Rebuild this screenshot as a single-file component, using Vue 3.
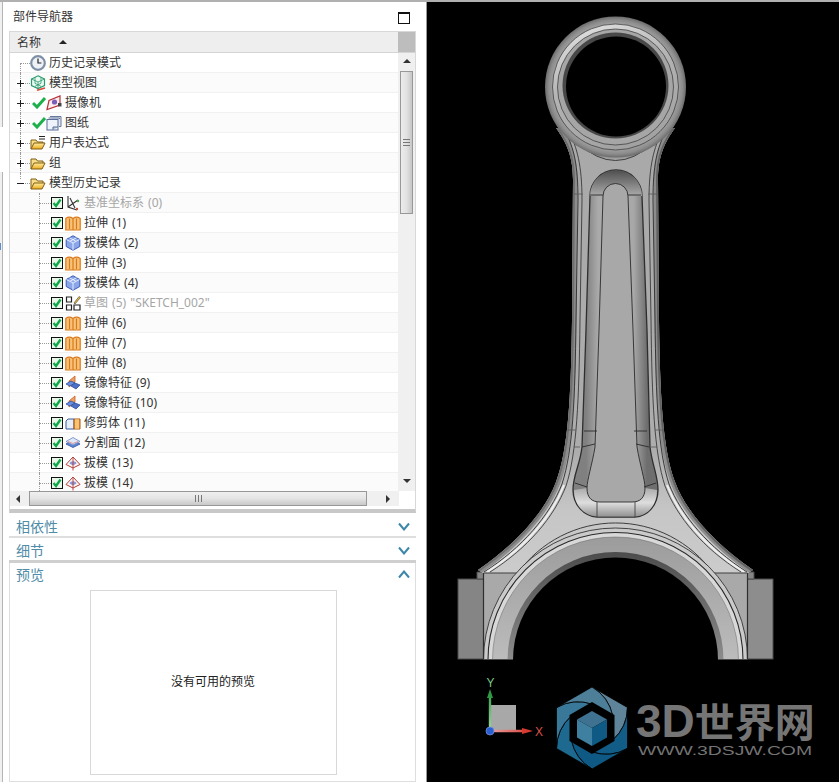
<script setup>
const rootRows = [
  { label: '历史记录模式', icon: 'clock' },
  { label: '模型视图', icon: 'view', expander: 'plus' },
  { label: '摄像机', icon: 'camera', expander: 'plus', check: true },
  { label: '图纸', icon: 'sheet', expander: 'plus', check: true },
  { label: '用户表达式', icon: 'folder-list', expander: 'plus' },
  { label: '组', icon: 'folder', expander: 'plus' },
  { label: '模型历史记录', icon: 'folder', expander: 'minus' }
]

const featureRows = [
  { label: '基准坐标系 (0)', icon: 'csys', muted: true },
  { label: '拉伸 (1)', icon: 'extrude' },
  { label: '拔模体 (2)', icon: 'body' },
  { label: '拉伸 (3)', icon: 'extrude' },
  { label: '拔模体 (4)', icon: 'body' },
  { label: '草图 (5) "SKETCH_002"', icon: 'sketch', muted: true },
  { label: '拉伸 (6)', icon: 'extrude' },
  { label: '拉伸 (7)', icon: 'extrude' },
  { label: '拉伸 (8)', icon: 'extrude' },
  { label: '镜像特征 (9)', icon: 'mirror' },
  { label: '镜像特征 (10)', icon: 'mirror' },
  { label: '修剪体 (11)', icon: 'trim' },
  { label: '分割面 (12)', icon: 'split' },
  { label: '拔模 (13)', icon: 'draft' },
  { label: '拔模 (14)', icon: 'draft' }
]

// logo aperture: six blades between the outer hexagon and the inner one
const hexPoint = (r, i) => {
  const a = ((-90 + 60 * i) * Math.PI) / 180
  return [592 + r * Math.cos(a), 728 + r * Math.sin(a)]
}
const sweep = (from, to) => {
  const mx = (from[0] + to[0]) / 2
  const my = (from[1] + to[1]) / 2
  const dx = to[0] - from[0]
  const dy = to[1] - from[1]
  return [mx + dy * 0.22, my - dx * 0.22]
}
const bladeColors = ['#5f8499', '#125d87', '#0f5a84', '#1d6990', '#3a7899', '#4e7f98']
const blades = bladeColors.map((fill, i) => {
  const v0 = hexPoint(41, i)
  const v1 = hexPoint(41, i + 1)
  const in1 = hexPoint(24, i + 1)
  const in2 = hexPoint(24, i + 2)
  const c0 = sweep(v0, in1)
  const c1 = sweep(v1, in2)
  const d =
    `M${v0} L${v1} Q${c1} ${in2} L${in1} Q${c0} ${v0} Z`
  return { fill, d }
})
</script>

<template>
  <div class="page">
    <svg class="sprite" width="0" height="0">
      <defs>
        <linearGradient id="folderFill" x1="0" y1="0" x2="0" y2="1">
          <stop offset="0" stop-color="#ffeea0" />
          <stop offset="1" stop-color="#ecaa20" />
        </linearGradient>
        <symbol id="ic-clock" viewBox="0 0 16 16">
          <circle cx="8" cy="8" r="6.800" fill="#eef2f7" stroke="#7f90a6" stroke-width="2.200" />
          <path d="M8 3.600V8h3.400" fill="none" stroke="#222" stroke-width="1.200" />
        </symbol>
        <symbol id="ic-view" viewBox="0 0 16 16">
          <path d="M8 .8l6.500 3.200v6.500L8 13.500l-6.500-3V4z" fill="#eafaf2" stroke="#2a9a70" stroke-width="1.200" />
          <path d="M1.500 4L8 7l6.500-3M8 7v6.500M5 2.300v6l6 3M11 2.300v6l-6 3" fill="none" stroke="#2a9a70" stroke-width=".8" />
          <path d="M7 15.300l8-2.300" stroke="#d84a3a" stroke-width="1.500" />
        </symbol>
        <symbol id="ic-camera" viewBox="0 0 16 16">
          <path d="M1 14.500l2-9L14 1v9z" fill="#fbeeee" stroke="#b8323a" stroke-width="1.200" />
          <circle cx="8.500" cy="7" r="2.600" fill="#7a5fb8" />
          <path d="M12 8h3.500v3.500H12z" fill="#444" />
        </symbol>
        <symbol id="ic-sheet" viewBox="0 0 16 16">
          <path d="M4 1.500h11v10h-2" fill="#dfe6f2" stroke="#66789c" />
          <path d="M2.500 3h11v1" fill="none" stroke="#66789c" />
          <rect x="1" y="4.500" width="11" height="10.500" fill="#eef2fa" stroke="#5a6e98" />
          <path d="M7 15v-3h5" fill="#b9c6e0" stroke="#5a6e98" />
        </symbol>
        <symbol id="ic-folder" viewBox="0 0 16 16">
          <path d="M1 14V4h5l1.500 2H13v2" fill="#f7dc8a" stroke="#7e5f12" />
          <path d="M1 14l3-6h11l-3 6z" fill="url(#folderFill)" stroke="#7e5f12" />
        </symbol>
        <symbol id="ic-folder-list" viewBox="0 0 16 16">
          <path d="M1 14V5h5l1.500 2H13v1" fill="#f7dc8a" stroke="#7e5f12" />
          <path d="M1 14l3-6h11l-3 6z" fill="url(#folderFill)" stroke="#7e5f12" />
          <path d="M9 1.500h6M9 4h6" stroke="#222" stroke-width="1.100" />
        </symbol>
        <symbol id="ic-csys" viewBox="0 0 16 16">
          <path d="M3 1v11l9 3M3 12l10-7M5 3l5 10" fill="none" stroke="#333" stroke-width="1.100" />
          <circle cx="13" cy="6" r="1.200" fill="#4aa84a" />
          <circle cx="12" cy="14" r="1.200" fill="#c8503a" />
        </symbol>
        <symbol id="ic-extrude" viewBox="0 0 16 16">
          <path d="M.8 3.500c2-1.500 5-1.500 7.200 0 2-1.500 5.200-1.500 7.200 0V15H.8z" fill="#f8c27a" stroke="#d9791a" stroke-width="1.200" />
          <path d="M4.500 3.500V14M8 3.500V15M11.500 3.500V14" stroke="#d9791a" stroke-width="1.200" />
        </symbol>
        <symbol id="ic-body" viewBox="0 0 16 16">
          <path d="M8 .8l6.800 3.700v7L8 15.200l-6.800-3.700v-7z" fill="#8aa6e8" stroke="#3a5cb8" />
          <path d="M1.500 4.500L8 8l6.500-3.500M8 8v7M4.500 2.800L11 6.300M11.500 2.800L5 6.300" fill="none" stroke="#eef3ff" stroke-width=".9" />
        </symbol>
        <symbol id="ic-sketch" viewBox="0 0 16 16">
          <path d="M1.500 2h5v5h-5zM1.500 10h5v5h-5zM9 10h6v5H9z" fill="#fff" stroke="#222" stroke-width="1.200" />
          <path d="M9 8l5-6.500 1.500 1L10 9z" fill="#e8b830" stroke="#555" stroke-width=".7" />
        </symbol>
        <symbol id="ic-mirror" viewBox="0 0 16 16">
          <path d="M4 6l6-5v6l-6 5z" fill="#f0a060" stroke="#c0602a" stroke-width=".8" />
          <path d="M1 9l5-3 4 2-5 3z" fill="#6a8ee0" stroke="#2f4e9c" stroke-width=".8" />
          <path d="M6 11l4-3 5 2-4 4z" fill="#4a70c8" stroke="#2f4e9c" stroke-width=".8" />
        </symbol>
        <symbol id="ic-trim" viewBox="0 0 16 16">
          <path d="M1 6l2-2h6v10H1z" fill="#e8eef8" stroke="#3a5aa0" />
          <path d="M9 4h6v10H9z" fill="#f0a040" stroke="#a85a10" />
          <path d="M11 4v10M13 4v10" stroke="#fde2b0" />
        </symbol>
        <symbol id="ic-split" viewBox="0 0 16 16">
          <path d="M1 9l7-4 7 4-7 3.500z" fill="#5a86d8" stroke="#2f4e9c" stroke-width=".8" />
          <path d="M1 6.500l7-4 7 4-7 3.500z" fill="#dfe8f8" stroke="#6a86c0" stroke-width=".8" />
          <path d="M3 6.500l5 2 5-2" fill="none" stroke="#d84a3a" stroke-width=".5" />
        </symbol>
        <symbol id="ic-draft" viewBox="0 0 16 16">
          <path d="M1 9.500L8 2l7 7.500-7 3.500z" fill="#fdf6f6" stroke="#b0403a" stroke-width="1" />
          <path d="M4.500 8.500c.5-3 6.500-3 7 0l-3.500 2z" fill="#8a9ad0" />
          <path d="M8 2v13.500" stroke="#b0403a" stroke-width=".9" />
        </symbol>
      </defs>
    </svg>

    <div class="gutter">
      <span class="gutter-top"></span>
      <span class="gutter-gap"></span>
      <span class="gutter-rest"></span>
    </div>

    <aside class="nav">
      <div class="nav-title">
        <span>部件导航器</span>
        <span class="restore"></span>
      </div>

      <div class="tree">
        <div class="tree-head">
          <div class="head-name">
            <span>名称</span>
            <span class="sort-arrow"></span>
          </div>
          <div class="head-corner"></div>
        </div>

        <div class="tree-body">
          <div class="rows">
            <div v-for="(row, i) in rootRows" :key="row.label" class="row">
              <span class="branch" :class="{ first: i === 0, last: i === rootRows.length - 1 }">
                <svg v-if="row.expander" class="expander" viewBox="0 0 9 9">
                  <path v-if="row.expander === 'plus'" d="M1 4.500h7M4.500 1v7" />
                  <path v-else d="M1 4.500h7" />
                </svg>
              </span>
              <svg v-if="row.check" class="tick" viewBox="0 0 14 12">
                <path d="M1 6l4 4 8-9" fill="none" stroke="#1db04c" stroke-width="3" />
              </svg>
              <svg class="icon"><use :href="'#ic-' + row.icon" /></svg>
              <span class="label">{{ row.label }}</span>
            </div>

            <div v-for="row in featureRows" :key="row.label" class="row">
              <span class="branch child"></span>
              <span class="checkbox">
                <svg viewBox="0 0 10 10"><path d="M1.500 5l2.500 3 4.500-6.500" fill="none" stroke="#10a84a" stroke-width="2.400" /></svg>
              </span>
              <svg class="icon"><use :href="'#ic-' + row.icon" /></svg>
              <span class="label" :class="{ muted: row.muted }">{{ row.label }}</span>
            </div>
          </div>

          <div class="vscroll">
            <span class="arrow up"></span>
            <div class="vthumb"><span class="vgrip"></span></div>
            <span class="vspace"></span>
            <span class="arrow down"></span>
          </div>
        </div>

        <div class="hscroll">
          <span class="arrow left"></span>
          <div class="hthumb"><span class="hgrip"></span></div>
          <span class="arrow right"></span>
        </div>
      </div>

      <div class="section sec-a">
        <span>相依性</span>
        <svg class="chevron" viewBox="0 0 12 9"><path d="M1 1.500l5 6 5-6" /></svg>
      </div>
      <div class="section sec-b">
        <span>细节</span>
        <svg class="chevron" viewBox="0 0 12 9"><path d="M1 1.500l5 6 5-6" /></svg>
      </div>
      <div class="preview">
        <div class="section sec-c">
          <span>预览</span>
          <svg class="chevron" viewBox="0 0 12 9"><path d="M1 7.500l5-6 5 6" /></svg>
        </div>
        <div class="preview-box">没有可用的预览</div>
      </div>
    </aside>

    <main class="viewport">
      <svg class="scene" viewBox="427 0 412 782" width="412" height="782">
        <defs>
          <linearGradient id="bodyFill" gradientUnits="userSpaceOnUse" x1="0" y1="150" x2="0" y2="570">
            <stop offset="0" stop-color="#a9a9a9" />
            <stop offset=".72" stop-color="#adadad" />
            <stop offset=".86" stop-color="#c6c6c6" />
            <stop offset="1" stop-color="#cbcbcb" />
          </linearGradient>
          <linearGradient id="filletFill" gradientUnits="userSpaceOnUse" x1="0" y1="146" x2="0" y2="161">
            <stop offset="0" stop-color="#6e6e6e" />
            <stop offset="1" stop-color="#a9a9a9" />
          </linearGradient>
          <radialGradient id="ringFill" gradientUnits="userSpaceOnUse" cx="615.500" cy="87" r="70.500">
            <stop offset=".86" stop-color="#a8a8a8" />
            <stop offset=".95" stop-color="#8c8c8c" />
            <stop offset="1" stop-color="#6c6c6c" />
          </radialGradient>
          <linearGradient id="ringShine" x1="0.300" y1="0" x2="0.700" y2="1">
            <stop offset="0" stop-color="#dedede" />
            <stop offset=".4" stop-color="#b4b4b4" />
            <stop offset="1" stop-color="#a0a0a0" />
          </linearGradient>
          <linearGradient id="wallFill" gradientUnits="userSpaceOnUse" x1="586" y1="0" x2="647" y2="0">
            <stop offset="0" stop-color="#808080" />
            <stop offset=".2" stop-color="#aaa" />
            <stop offset=".78" stop-color="#a8a8a8" />
            <stop offset="1" stop-color="#6e6e6e" />
          </linearGradient>
          <linearGradient id="archFill" gradientUnits="userSpaceOnUse" x1="0" y1="170" x2="0" y2="194">
            <stop offset="0" stop-color="#4e4e4e" />
            <stop offset="1" stop-color="#a4a4a4" />
          </linearGradient>
          <linearGradient id="cupFill" gradientUnits="userSpaceOnUse" x1="0" y1="480" x2="0" y2="518">
            <stop offset="0" stop-color="#8e8e8e" />
            <stop offset=".6" stop-color="#dedede" />
            <stop offset="1" stop-color="#8a8a8a" />
          </linearGradient>
          <linearGradient id="boreFill" gradientUnits="userSpaceOnUse" x1="0" y1="552" x2="0" y2="660">
            <stop offset="0" stop-color="#4c4c4c" />
            <stop offset="1" stop-color="#8c8c8c" />
          </linearGradient>
          <linearGradient id="bandFill" gradientUnits="userSpaceOnUse" x1="0" y1="537" x2="0" y2="660">
            <stop offset="0" stop-color="#9c9c9c" />
            <stop offset="1" stop-color="#bcbcbc" />
          </linearGradient>
          <linearGradient id="yArrow" gradientUnits="userSpaceOnUse" x1="0" y1="731" x2="0" y2="690">
            <stop offset="0" stop-color="#9fd8a0" />
            <stop offset="1" stop-color="#2f9a44" />
          </linearGradient>
          <linearGradient id="xArrow" gradientUnits="userSpaceOnUse" x1="490" y1="0" x2="533" y2="0">
            <stop offset="0" stop-color="#e8a0a0" />
            <stop offset="1" stop-color="#d63a30" />
          </linearGradient>
          <clipPath id="bodyClip">
            <path d="M556 128C566 142 573 155 573 180L572 320C571 400 568 450 556 482C545 512 515 545 478 570L483 573V659H748V573L753 570C716 545 686 512 675 482C663 450 660 400 659 320L658 180C658 155 665 142 675 128Z" />
          </clipPath>
          <clipPath id="bigEndClip">
            <rect x="483.500" y="500" width="264" height="160" />
          </clipPath>
          <path id="sideEdge" d="M556 128C566 142 573 155 573 180L572 320C571 400 568 450 556 482C545 512 515 545 478 570" />
          <g id="sideLines" fill="none">
            <path d="M565 131C574 148 578 165 578 200L576 320C575 400 573 450 562 484C550 515 522 548 484 572" stroke="#2c2c2c" stroke-width=".9" />
            <path d="M569 131C577 148 582 165 582 200L580 320C579 400 577 452 566 486C554 517 528 548 490 572" stroke="#3a3a3a" stroke-width=".9" />
            <path d="M564 485C552 516 525 548 487 572" stroke="#efefef" stroke-width="2" />
            <path d="M574 194H583M568 430H576M574 447H580" stroke="#555" stroke-width=".8" />
          </g>
          <g id="pocketLines" fill="none" stroke="#2a2a2a" stroke-width=".9">
            <path d="M590 195H603M584 431H597M582 447L595 444M575 483L587 487" />
          </g>
        </defs>

        <!-- connecting rod -->
        <rect x="458" y="579" width="26" height="80" fill="#858585" stroke="#4a4a4a" />
        <rect x="747" y="579" width="26" height="80" fill="#8d8d8d" stroke="#4a4a4a" />
        <path d="M477 579V572H484V579ZM747 579V572H754V579Z" fill="#858585" stroke="#4a4a4a" />

        <path d="M556 128C566 142 573 155 573 180L572 320C571 400 568 450 556 482C545 512 515 545 478 570L483 573V659H748V573L753 570C716 545 686 512 675 482C663 450 660 400 659 320L658 180C658 155 665 142 675 128Z" fill="url(#bodyFill)" />
        <g clip-path="url(#bodyClip)" fill="none">
          <use href="#sideEdge" stroke="#8c8c8c" stroke-width="9" />
          <use href="#sideEdge" stroke="#6e6e6e" stroke-width="4" />
          <use href="#sideEdge" transform="matrix(-1 0 0 1 1231 0)" stroke="#8c8c8c" stroke-width="9" />
          <use href="#sideEdge" transform="matrix(-1 0 0 1 1231 0)" stroke="#626262" stroke-width="4" />
        </g>
        <use href="#sideLines" />
        <use href="#sideLines" transform="matrix(-1 0 0 1 1231 0)" />

        <!-- web pocket -->
        <path d="M590 196A26 26 0 0 1 642 196L647 330L650 447C652 465 658 475 658 490C658 505 648 516 635 517H597C584 516 573 505 573 490C573 475 580 465 582 447L586 330Z" fill="url(#wallFill)" stroke="#2e2e2e" stroke-width="1.300" />
        <path d="M590 196A26 26 0 0 1 642 196Z" fill="url(#archFill)" />
        <path d="M574 490C574 505 584 516 597 516.500H635C648 516 657 505 657 490L645 488C645 498 640 502 632 502H600C592 502 587 498 587 488Z" fill="url(#cupFill)" />
        <path d="M603 196A12.500 12.500 0 0 1 628 196L633 330L637 447C640 465 645 480 645 488C645 498 640 502 632 502H600C592 502 587 498 587 488C587 480 592 465 595 447L599 330Z" fill="#a8a8a8" stroke="#2a2a2a" stroke-width=".9" />
        <use href="#pocketLines" />
        <use href="#pocketLines" transform="matrix(-1 0 0 1 1231 0)" />
        <path d="M597 502V517M635 502V517" stroke="#444" stroke-width=".9" />

        <!-- small end -->
        <path d="M572 138L578 143Q615.500 178 653 143L659 138Z" fill="url(#filletFill)" />
        <path d="M578 143Q615.500 178 653 143" fill="none" stroke="#333" stroke-width=".9" />
        <circle cx="615.500" cy="87" r="70.500" fill="url(#ringFill)" />
        <circle cx="615.500" cy="87" r="63" fill="url(#ringShine)" stroke="#333" stroke-width=".7" />
        <circle cx="615.500" cy="87" r="58" fill="#a6a6a6" stroke="#333" stroke-width=".7" />
        <circle cx="615.500" cy="85.500" r="53" fill="#484848" />
        <circle cx="616" cy="86.500" r="50" fill="#000" />

        <!-- big end -->
        <rect x="483.500" y="573" width="264" height="86" fill="#a9a9a9" />
        <path d="M483.500 573H518M713 573H747.500" stroke="#3e3e3e" />
        <path d="M518 573A120 120 0 0 1 713 573" fill="none" stroke="#2e2e2e" stroke-width=".9" />
        <g clip-path="url(#bigEndClip)">
          <circle cx="615.500" cy="660" r="132" fill="#cacaca" stroke="#333" stroke-width=".9" />
          <circle cx="615.500" cy="660" r="127.500" fill="#d8d8d8" stroke="#2a2a2a" stroke-width="1.100" />
          <circle cx="615.500" cy="660" r="123" fill="url(#bandFill)" stroke="#666" stroke-width=".5" />
          <circle cx="615.500" cy="660" r="108" fill="url(#boreFill)" />
          <circle cx="615.500" cy="660" r="102.500" fill="#000" />
        </g>
        <path d="M483.500 573V659.500M747.500 573V659.500" stroke="#2e2e2e" stroke-width="1.200" />
        <path d="M484 659.500H513M718 659.500H747" stroke="#4a4a4a" />

        <!-- view triad -->
        <rect x="490" y="705" width="26" height="26" fill="#a8a8a8" />
        <path d="M490 731V696" stroke="url(#yArrow)" stroke-width="2.400" />
        <path d="M487 698L490 689L493 698Z" fill="#2f9a44" />
        <path d="M490 731H524" stroke="url(#xArrow)" stroke-width="2.400" />
        <path d="M522 728L533 731L522 734Z" fill="#d63a30" />
        <circle cx="490" cy="731" r="4" fill="#2a5fd0" stroke="#6f8fe0" stroke-width=".8" />
        <text x="490.500" y="687" class="axis" fill="#7cc888">Y</text>
        <text x="539" y="736" class="axis" fill="#d8504a">X</text>

        <!-- logo -->
        <path v-for="b in blades" :key="b.fill" :d="b.d" :fill="b.fill" stroke="#000" stroke-width=".8" />
        <path d="M592 702L614.500 715V741L592 754L569.500 741V715Z" fill="#000" />
        <path d="M592 711L607 719.500L592 728L577 719.500Z" fill="#3f7290" />
        <path d="M577 719.500L592 728V746L577 737.500Z" fill="#3f7f9f" />
        <path d="M607 719.500L592 728V746L607 737.500Z" fill="#0e5a84" />
        <text x="636" y="737" class="logo-big"><tspan class="logo-latin">3D</tspan><tspan>世界网</tspan></text>
        <text x="638" y="755" class="logo-small" textLength="174" lengthAdjust="spacingAndGlyphs">WWW.3DSJW.COM</text>
      </svg>
    </main>
  </div>
</template>

<style scoped>
.page {
  display: flex;
  width: 839px;
  height: 782px;
  overflow: hidden;
  box-sizing: border-box;
  border-top: 2px solid #b0b0b0;
  font-family: "Noto Sans", "Noto Sans CJK SC", sans-serif;
  font-size: 12px;
  color: #333;
  background: #000;
}

.sprite {
  position: absolute;
}

.gutter {
  width: 3px;
  display: flex;
  flex-direction: column;
  background: #fff;
}
.gutter-top {
  height: 125px;
  background: #f0f0f0;
  border-right: 1px solid #b5b5b5;
}
.gutter-gap {
  height: 45px;
}
.gutter-rest {
  flex: 1;
  position: relative;
  background: #f0f0f0;
  border-right: 1px solid #b5b5b5;
}
/* bit of the window behind the panel */
.gutter-rest::before {
  content: "";
  position: absolute;
  left: 0;
  top: 71px;
  width: 1px;
  height: 7px;
  background: #5b8fd0;
}

.nav {
  width: 424px;
  box-sizing: border-box;
  padding-left: 6px;
  padding-right: 10px;
  display: flex;
  flex-direction: column;
  background: #fff;
  border-right: 1px solid #999;
}

.nav-title {
  height: 29px;
  display: flex;
  align-items: center;
  justify-content: space-between;
  box-sizing: border-box;
  padding: 0 6px 2px 4px;
  flex: none;
}
.restore {
  width: 10px;
  height: 9px;
  border: 1px solid #111;
  border-top-width: 2px;
  margin-top: 5px;
}

.tree {
  border: 1px solid #d8d8d8;
  border-bottom: 4px solid #c8c8c8;
  flex: none;
}
.tree-head {
  display: flex;
  height: 20px;
  background: #eeeeee;
  border-bottom: 1px solid #d4d4d4;
}
.head-name {
  width: 389px;
  display: flex;
  align-items: center;
  padding-left: 7px;
  box-sizing: border-box;
}
.sort-arrow {
  margin-left: 18px;
  border-left: 4px solid transparent;
  border-right: 4px solid transparent;
  border-bottom: 4px solid #222;
}
.head-corner {
  width: 17px;
  background: #bdbdbd;
}

.tree-body {
  display: flex;
  height: 438px;
}
.rows {
  width: 389px;
  overflow: hidden;
}
.row {
  height: 20px;
  display: flex;
  align-items: center;
  box-sizing: border-box;
  border-bottom: 1px solid #f1f1f1;
}
.row:nth-child(even) {
  background: #fbfbfb;
}

.branch {
  position: relative;
  flex: none;
  width: 20px;
  height: 20px;
}
.branch::before {
  content: "";
  position: absolute;
  left: 10px;
  top: 0;
  bottom: 0;
  border-left: 1px dotted #999;
}
.branch::after {
  content: "";
  position: absolute;
  left: 10px;
  right: 0;
  top: 10px;
  border-top: 1px dotted #999;
}
.branch.first::before {
  top: 10px;
}
.branch.last::before {
  bottom: 10px;
}
.branch.child {
  width: 21px;
  margin-left: 20px;
}
.branch.child::before {
  left: 9px;
}
.branch.child::after {
  left: 9px;
}

.expander {
  position: absolute;
  left: 6px;
  top: 6px;
  width: 9px;
  height: 9px;
  background: #fff;
  z-index: 1;
}
.expander path {
  stroke: #222;
  stroke-width: 1;
  fill: none;
}

.tick {
  width: 14px;
  height: 12px;
  margin-left: 2px;
  flex: none;
}
.checkbox {
  width: 10px;
  height: 10px;
  border: 1px solid #111;
  background: #eaf8ea;
  flex: none;
  margin-right: 2px;
  display: flex;
}
.icon {
  width: 16px;
  height: 16px;
  flex: none;
}
.label {
  margin-left: 3px;
  padding-bottom: 2px;
  white-space: nowrap;
  word-spacing: 1px;
}
.label.muted {
  color: #a6a6a6;
}

.vscroll {
  width: 17px;
  background: #f0f0f0;
  display: flex;
  flex-direction: column;
  align-items: center;
}
.vthumb {
  width: 13px;
  height: 143px;
  box-sizing: border-box;
  margin-top: 8px;
  border: 1px solid #989898;
  background: linear-gradient(to right, #ececec, #e2e2e2 50%, #c6c6c6);
  display: flex;
  align-items: center;
  justify-content: center;
}
.vgrip {
  width: 7px;
  height: 7px;
  background: repeating-linear-gradient(to bottom, #777 0 1px, transparent 1px 3px);
}
.vspace {
  flex: 1;
}
.arrow {
  width: 0;
  height: 0;
  flex: none;
  border-style: solid;
  border-color: transparent;
}
.arrow.up {
  margin-top: 6px;
  border-width: 0 4px 4px;
  border-bottom-color: #333;
}
.arrow.down {
  margin-bottom: 8px;
  border-width: 4px 4px 0;
  border-top-color: #333;
}

.hscroll {
  height: 15px;
  width: 389px;
  background: #f0f0f0;
  margin-bottom: 3px;
  display: flex;
  align-items: center;
}
.arrow.left {
  margin-left: 6px;
  border-width: 4px 4px 4px 0;
  border-right-color: #333;
}
.arrow.right {
  margin-left: 19px;
  border-width: 4px 0 4px 4px;
  border-left-color: #333;
}
.hthumb {
  margin-left: 9px;
  width: 338px;
  height: 15px;
  box-sizing: border-box;
  border: 1px solid #989898;
  background: linear-gradient(to bottom, #f0f0f0, #e4e4e4 50%, #c8c8c8);
  display: flex;
  align-items: center;
  justify-content: center;
}
.hgrip {
  width: 7px;
  height: 7px;
  background: repeating-linear-gradient(to right, #777 0 1px, transparent 1px 3px);
}

.section {
  display: flex;
  align-items: center;
  justify-content: space-between;
  padding: 0 6px 0 7px;
  font-size: 14px;
  color: #4f8ca8;
  flex: none;
}
.sec-a {
  height: 25px;
  padding-top: 3px;
  box-sizing: border-box;
  border-bottom: 2px solid #dedede;
}
.sec-b {
  height: 25px;
  box-sizing: border-box;
  padding-top: 2px;
  border-bottom: 3px solid #cfcfcf;
}
.sec-c {
  height: 27px;
  padding: 0 5px 5px 6px;
  box-sizing: border-box;
}
.chevron {
  width: 12px;
  height: 9px;
}
.chevron path {
  fill: none;
  stroke: #3f87a8;
  stroke-width: 2;
}

.preview {
  flex: 1;
  border: 1px solid #dedede;
  border-top: none;
  display: flex;
  flex-direction: column;
  align-items: stretch;
}
.preview-box {
  width: 247px;
  height: 185px;
  box-sizing: border-box;
  align-self: center;
  margin-left: 1px;
  padding-bottom: 3px;
  border: 1px solid #d8d8d8;
  display: flex;
  align-items: center;
  justify-content: center;
  color: #222;
}

.viewport {
  flex: 1;
  background: #000;
  height: 782px;
  margin-top: -2px;
}
.scene {
  display: block;
}
.axis {
  font-family: "Liberation Sans", sans-serif;
  font-size: 12px;
  text-anchor: middle;
}
.logo-big {
  font-family: "Liberation Sans", "Noto Sans CJK SC", sans-serif;
  font-size: 40px;
  font-weight: 700;
  fill: #757575;
}
.logo-latin {
  font-size: 46px;
}
.logo-small {
  font-family: "Liberation Sans", sans-serif;
  font-size: 12px;
  fill: #757575;
}
</style>
